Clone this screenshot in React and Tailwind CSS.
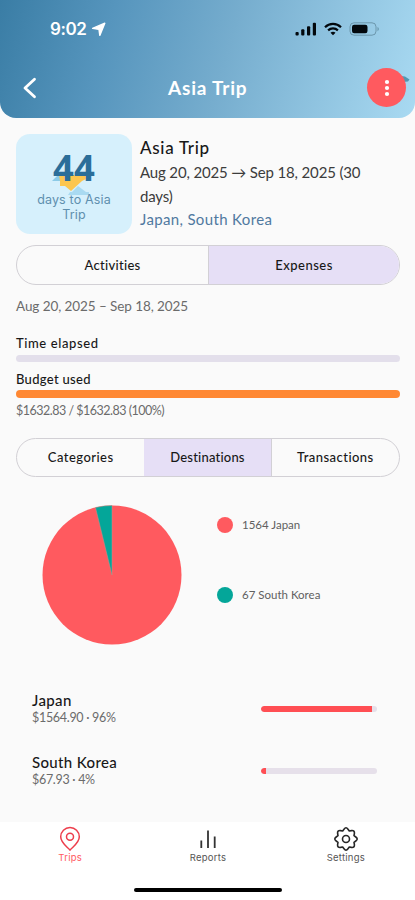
import React from "react";

function StatusBar() {
  return (
    <div className="flex h-[58px] items-center justify-between pl-[50px] pr-[35px]">
      <div className="flex items-center gap-[4px]">
        <span className="w-[37px] whitespace-nowrap font-['Inter',sans-serif] text-[17px] font-semibold leading-[20px] tracking-[-0.4px] text-white">9:02</span>
        <svg width="15" height="15" viewBox="0 0 15 15" fill="white" stroke="white" strokeWidth="1.4" strokeLinejoin="round">
          <path d="M13.8 1.2 8.8 13.4 8 7.4 1.6 6.4z" />
        </svg>
      </div>
      <div className="flex items-center gap-[7px]">
        <svg width="22" height="14" viewBox="0 0 22 14" fill="#02080d">
          <rect x="0.5" y="10" width="3.2" height="3.6" rx="1" />
          <rect x="6.2" y="7.2" width="3.2" height="6.4" rx="1" />
          <rect x="12" y="4.2" width="3.2" height="9.4" rx="1" />
          <rect x="17.8" y="0.8" width="3.2" height="12.8" rx="1" />
        </svg>
        <svg width="18" height="14" viewBox="0 0 18 14" fill="none" stroke="#02080d" strokeWidth="2.2">
          <path d="M1 5.2C5.5.8 12.5.8 17 5.2" />
          <path d="M4.1 8.4c2.8-2.6 7-2.6 9.8 0" />
          <path d="M6.5 10.7c1.4-1.2 3.6-1.2 5 0L9 13.3z" fill="#02080d" stroke="none" />
        </svg>
        <svg width="31" height="14" viewBox="0 0 31 14">
          <rect x="1" y="0.8" width="26" height="12.4" rx="4" fill="none" stroke="#5d8699" strokeOpacity=".75" />
          <rect x="3" y="2.8" width="15.5" height="8.4" rx="2.2" fill="#02080d" />
          <path d="M28.5 5v4.2c1.8-.7 1.8-3.5 0-4.2z" fill="#6696ab" />
        </svg>
      </div>
    </div>
  );
}

function Header() {
  return (
    <header className="h-[118px] rounded-b-[16px] bg-[linear-gradient(106deg,#3a7da5_0%,#5695bd_26%,#76adce_54%,#a9daf2_100%)]">
      <StatusBar />
      <div className="flex h-[59px] items-center justify-between pl-[22px] pr-[9px]">
        <svg className="mr-[11px]" width="16" height="22" viewBox="0 0 16 22" fill="none" stroke="white" strokeWidth="2.8" strokeLinecap="round" strokeLinejoin="round">
          <path d="M12.5 2.2 3 11l9.5 8.8" />
        </svg>
        <h1 className="w-[80px] whitespace-nowrap text-[19px] font-bold leading-[24px] tracking-[0.8px] text-white">Asia Trip</h1>
        <div className="relative">
          <svg className="absolute left-[34px] top-[7px]" width="9" height="9" viewBox="0 0 9 9">
            <path d="M0 1 4 1.5 8.5 4.5 7 6.5 1 7z" fill="#5397b0" />
          </svg>
          <button className="relative flex h-[39px] w-[39px] items-center justify-center rounded-full bg-[#ff5a5f]">
            <svg width="6" height="18" viewBox="0 0 6 18" fill="white">
              <circle cx="3" cy="3" r="2.1" /><circle cx="3" cy="9" r="2.1" /><circle cx="3" cy="15" r="2.1" />
            </svg>
          </button>
        </div>
      </div>
    </header>
  );
}

function Summary() {
  return (
    <section className="flex h-[100px] gap-[8px]">
      <div className="relative h-[100px] w-[116px] shrink-0 rounded-[14px] bg-[#d6f0fc] text-center">
        <svg className="absolute left-[34px] top-[38px]" width="44" height="26" viewBox="0 0 44 26">
          <path d="M2 9 8 3h6v6z" fill="#8ccbe8" />
          <path d="M9 3h27v4l-4 2-11 10-6-5h-5V9z" fill="#fcc64f" />
          <path d="m18 23 2-3h2l6-6 8 6h3v3z" fill="#a9daf1" />
        </svg>
        <div className="relative pt-[14px] font-['Noto_Sans',sans-serif] text-[36.5px] font-bold leading-[38px] text-[#2b6e99]">44</div>
        <div className="relative mt-[6px] font-['Inter',sans-serif] text-[12.5px] leading-[15px] tracking-[0.15px] text-[#5f8fae]">days to Asia<br />Trip</div>
      </div>
      <div className="whitespace-nowrap text-[15px] leading-[24px] text-[#3c3c3c]">
        <div className="mt-px text-[17px] font-medium leading-[25px] tracking-[0.7px] text-[#181818]">Asia Trip</div>
        <div className="tracking-[-0.15px]">Aug 20, 2025 → Sep 18, 2025 (30<br />days)</div>
        <div className="leading-[22px] tracking-[0.35px] text-[#5079a0]">Japan, South Korea</div>
      </div>
    </section>
  );
}

function Bar({ label, labelClass, children }) {
  return (
    <div className="h-[36px]">
      <div className={`pt-px text-[13px] font-medium leading-[18px] text-[#181818] ${labelClass}`}>{label}</div>
      {children}
    </div>
  );
}

function Destination({ name, amount, percent }) {
  return (
    <div className="flex h-[62px] items-center justify-between pl-[16px] pr-[23px]">
      <div className="whitespace-nowrap">
        <div className="text-[15px] font-medium leading-[18px] tracking-[0.35px] text-[#181818]">{name}</div>
        <div className="pt-px text-[12.5px] leading-[16px] tracking-[-0.3px] text-[#6b6b6b]">{amount} · {percent}%</div>
      </div>
      <div className="mt-[2px] h-[6px] w-[116px] overflow-hidden rounded-full bg-[#e6e0ea]">
        <div className="h-full rounded-l-full bg-[#ff4e53]" style={{ width: `${percent}%` }} />
      </div>
    </div>
  );
}

function BottomNav() {
  return (
    <nav className="mt-auto h-[78px] bg-white">
      <div className="grid h-[66px] grid-cols-3 text-center font-['Inter',sans-serif] text-[9.5px] leading-[12px] tracking-[0.25px] text-[#555]">
        <div className="flex flex-col items-center pl-[2px] pt-[4px] text-[#ff5a5f]">
          <svg width="24" height="26" viewBox="0 0 24 26" fill="none" stroke="#ed3e4c" strokeWidth="1.5" strokeLinejoin="round">
            <path d="M12 24.2c-1.4-2.5-9.3-6.8-9.3-13.4a9.3 9.3 0 0 1 18.6 0c0 6.6-7.9 10.9-9.3 13.4z" />
            <circle cx="12" cy="10.8" r="3.5" />
          </svg>
          <span>Trips</span>
        </div>
        <div className="flex flex-col items-center pl-px pt-[4px]">
          <svg width="24" height="26" viewBox="0 0 24 26" fill="none" stroke="#333" strokeWidth="1.8">
            <path d="M5.3 14.5v7.5M12 4.5v17.5M18.7 10.5v11.5" />
          </svg>
          <span>Reports</span>
        </div>
        <div className="flex flex-col items-center pt-[4px]">
          <svg width="26" height="26" viewBox="0 0 26 26" fill="none" stroke="#262626" strokeWidth="1.6" strokeLinejoin="round">
            <path d="M11 3.2Q13 .4 15 3.2L16.3 5 18.5 4.6Q21.8 4.2 21.4 7.5L21 9.7 22.8 11Q25.6 13 22.8 15L21 16.3 21.4 18.5Q21.8 21.8 18.5 21.4L16.3 21 15 22.8Q13 25.6 11 22.8L9.7 21 7.5 21.4Q4.2 21.8 4.6 18.5L5 16.3 3.2 15Q.4 13 3.2 11L5 9.7 4.6 7.5Q4.2 4.2 7.5 4.6L9.7 5z" />
            <circle cx="13" cy="13" r="3.5" />
          </svg>
          <span>Settings</span>
        </div>
      </div>
      <div className="mx-auto h-[4px] w-[148px] rounded-full bg-black" />
    </nav>
  );
}

export default function App() {
  return (
    <div className="flex h-[900px] w-[415px] flex-col overflow-hidden bg-[#fafafa] font-['Lato','Noto_Sans',sans-serif] [font-variant-ligatures:none]">
      <Header />
      <main className="pl-[16px] pr-[15px] pt-[16px]">
        <Summary />
        <div className="mt-[11px] grid h-[40px] grid-cols-[192px_1fr] overflow-hidden rounded-full border border-[#d2d0d5] text-center text-[13px] font-medium leading-[38px] tracking-[0.3px] text-[#181818]">
          <div className="border-r border-[#d2d0d5]">Activities</div>
          <div className="bg-[#e6dff6] tracking-[0.5px]">Expenses</div>
        </div>
        <div className="mt-[12px] text-[13.5px] leading-[18px] tracking-[-0.08px] text-[#6b6b6b]">Aug 20, 2025 – Sep 18, 2025</div>
        <div className="mt-[18px]">
          <Bar label="Time elapsed" labelClass="tracking-[0.6px]"><div className="mt-[3px] h-[7px] rounded-full bg-[#e3dfeb]" /></Bar>
          <Bar label="Budget used" labelClass="tracking-[0.3px]"><div className="mt-[2px] h-[8px] rounded-full bg-[#ff8833]" /></Bar>
        </div>
        <div className="mt-[-3px] text-[12.5px] leading-[18px] tracking-[-0.5px] text-[#6b6b6b]">$1632.83 / $1632.83 (100%)</div>
        <div className="mt-[18px] grid h-[39px] grid-cols-3 overflow-hidden rounded-full border border-[#d2d0d5] text-center text-[13px] font-medium leading-[37px] tracking-[0.45px] text-[#181818]">
          <div>Categories</div>
          <div className="border-r border-[#d2d0d5] bg-[#e6dff6] tracking-[0.2px]">Destinations</div>
          <div>Transactions</div>
        </div>
        <div className="mt-[28px] flex h-[140px] pl-[26px]">
          <svg width="140" height="140" viewBox="-70 -70 140 140">
            <circle r="69.5" fill="#ff5a5f" />
            <path d="M0 0V-69.5A69.5 69.5 0 0 0-16.5-67.5z" fill="#04a699" stroke="#b59a91" strokeWidth=".5" />
          </svg>
          <div className="ml-[35px] flex flex-col gap-[54px] pt-[11.5px] text-[11.5px] leading-[16px] text-[#606060]">
            <div className="flex h-[16px] items-center gap-[9px]"><i className="h-[16px] w-[16px] rounded-full bg-[#ff5a5f]" /><span>1564 Japan</span></div>
            <div className="flex h-[16px] items-center gap-[9px]"><i className="h-[16px] w-[16px] rounded-full bg-[#04a699]" /><span>67 South Korea</span></div>
          </div>
        </div>
        <div className="mt-[32px]">
          <Destination name="Japan" amount="$1564.90" percent={96} />
          <Destination name="South Korea" amount="$67.93" percent={4} />
        </div>
      </main>
      <BottomNav />
    </div>
  );
}
